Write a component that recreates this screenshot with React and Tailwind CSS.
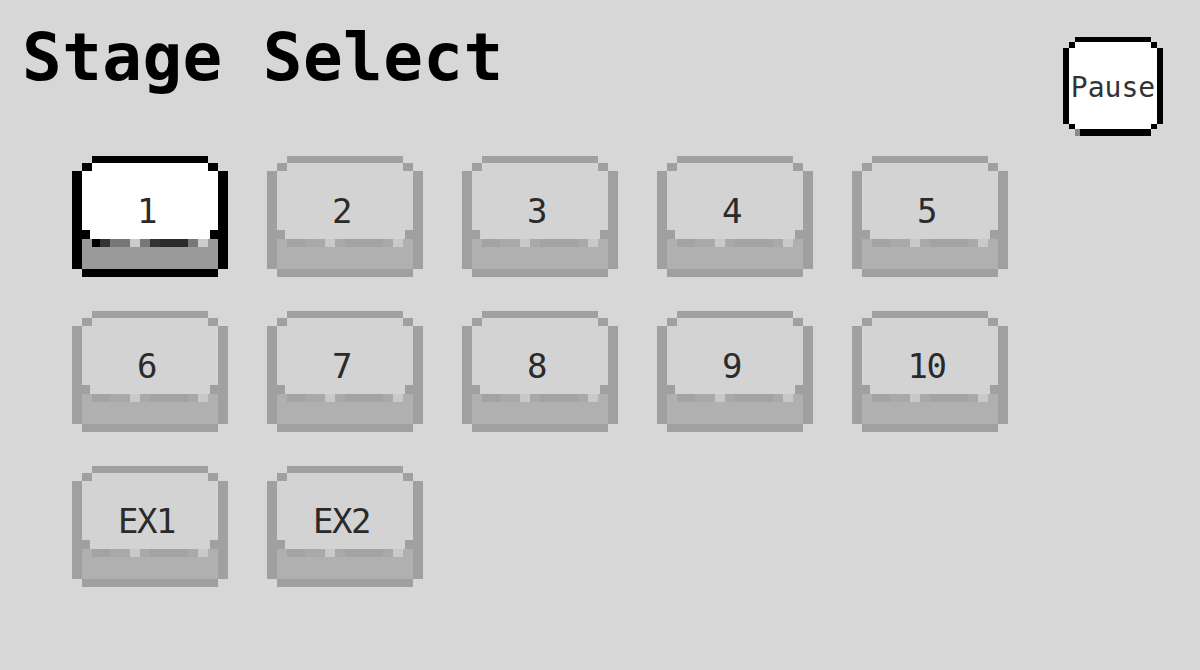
const STAGES = ["1", "2", "3", "4", "5", "6", "7", "8", "9", "10", "EX1", "EX2"];

const ACTIVE = {
  edge: "#000000",
  face: "#ffffff",
  base: "#9a9a9a",
  stripe: ["#000000", "#333333", "#777777", "#cccccc", "#777777", "#333333", "#2b2b2b", "#777777", "#cccccc"],
};

const LOCKED = {
  edge: "#a0a0a0",
  face: "#d3d3d3",
  base: "#b0b0b0",
  stripe: ["#a3a3a3", "#a3a3a3", "#a9a9a9", "#c9c9c9", "#a9a9a9", "#a3a3a3", "#a3a3a3", "#a9a9a9", "#c9c9c9"],
};

// x ranges of the little texture bits on top of the button's base
const STRIPE_X = [20, 28, 38, 58, 68, 78, 88, 116, 126, 136];

function ButtonFrame({ c }) {
  return (
    <svg width="156" height="121" viewBox="0 0 156 121" shapeRendering="crispEdges" className="col-start-1 row-start-1">
      <rect x="10" y="7" width="136" height="76" fill={c.face} />
      <rect x="10" y="83" width="136" height="30" fill={c.base} />
      {c.stripe.map((col, i) => (
        <rect key={i} x={STRIPE_X[i]} y="83" width={STRIPE_X[i + 1] - STRIPE_X[i]} height="8" fill={col} />
      ))}
      <rect x="20" y="0" width="116" height="7" fill={c.edge} />
      <rect x="10" y="7" width="10" height="8" fill={c.edge} />
      <rect x="136" y="7" width="10" height="8" fill={c.edge} />
      <rect x="0" y="15" width="10" height="98" fill={c.edge} />
      <rect x="146" y="15" width="10" height="98" fill={c.edge} />
      <rect x="10" y="74" width="8" height="9" fill={c.edge} />
      <rect x="138" y="74" width="8" height="9" fill={c.edge} />
      <rect x="10" y="113" width="136" height="8" fill={c.edge} />
    </svg>
  );
}

function StageButton({ label, active }) {
  return (
    <button className="grid w-[156px] h-[121px] cursor-pointer">
      <ButtonFrame c={active ? ACTIVE : LOCKED} />
      <span className="col-start-1 row-start-1 self-start justify-self-center mt-[38px] mr-[7px] text-[34px] leading-none tracking-[-1.5px] text-[#2a2a2a] font-['DejaVu_Sans_Mono',monospace]">
        {label}
      </span>
    </button>
  );
}

function PauseButton() {
  return (
    <button className="grid w-[100px] h-[99px] mt-[37px] cursor-pointer">
      <svg width="100" height="99" viewBox="0 0 100 99" shapeRendering="crispEdges" className="col-start-1 row-start-1">
        <rect x="6" y="5" width="88" height="87" fill="#ffffff" />
        <rect x="12" y="0" width="76" height="5" fill="#000" />
        <rect x="6" y="5" width="6" height="6" fill="#000" />
        <rect x="88" y="5" width="6" height="6" fill="#000" />
        <rect x="0" y="11" width="6" height="76" fill="#000" />
        <rect x="94" y="11" width="6" height="76" fill="#000" />
        <rect x="6" y="87" width="6" height="5" fill="#000" />
        <rect x="88" y="87" width="6" height="5" fill="#000" />
        <rect x="12" y="92" width="5" height="7" fill="#888" />
        <rect x="17" y="92" width="71" height="7" fill="#000" />
      </svg>
      <span className="col-start-1 row-start-1 self-start justify-self-center mt-[37px] text-[28px] leading-none text-[#333] font-['DejaVu_Sans_Mono',monospace]">
        Pause
      </span>
    </button>
  );
}

export default function App() {
  return (
    <div className="w-[1200px] h-[670px] bg-[#d7d7d7] flex flex-col overflow-hidden">
      <header className="flex justify-between items-start pl-[22px] pr-[37px]">
        <h1 className="mt-[25px] text-[66px] leading-none tracking-[0.4px] font-bold text-black font-['DejaVu_Sans_Mono',monospace]">
          Stage Select
        </h1>
        <PauseButton />
      </header>
      <div className="ml-[72px] mt-[20px] grid grid-cols-[repeat(5,156px)] gap-x-[39px] gap-y-[34px]">
        {STAGES.map((s, i) => (
          <StageButton key={s} label={s} active={i === 0} />
        ))}
      </div>
    </div>
  );
}
